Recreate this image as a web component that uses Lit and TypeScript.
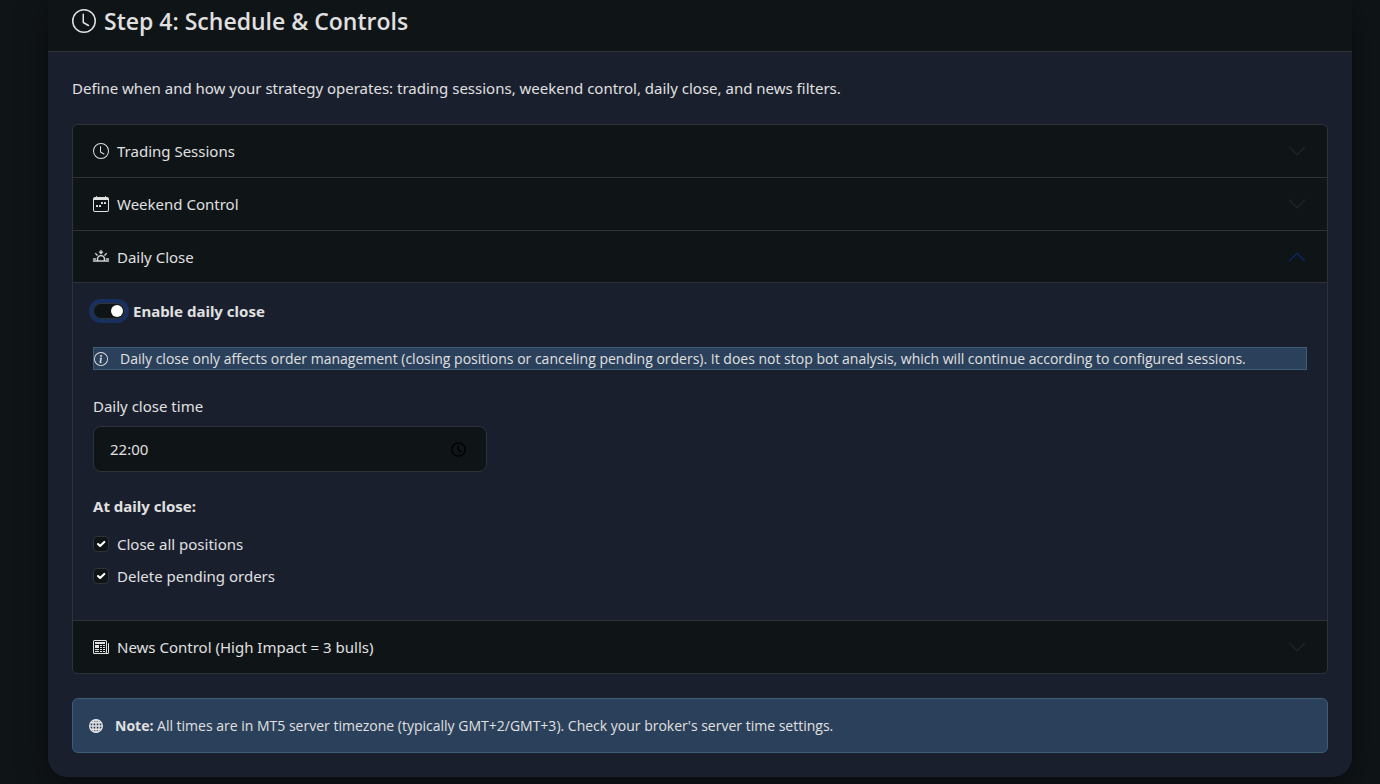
import { LitElement, html, css, svg } from "lit";
import { customElement, property, state } from "lit/decorators.js";
import { classMap } from "lit/directives/class-map.js";

const ICONS: Record<string, unknown> = {
  clock: svg`<path d="M8 3.5a.5.5 0 0 0-1 0V9a.5.5 0 0 0 .252.434l3.5 2a.5.5 0 0 0 .496-.868L8 8.71z"/><path d="M8 16A8 8 0 1 0 8 0a8 8 0 0 0 0 16m7-8A7 7 0 1 1 1 8a7 7 0 0 1 14 0"/>`,
  picker: svg`<g fill="none" stroke="currentColor" stroke-width="1.500"><circle cx="8" cy="8" r="7.100"/><path d="M7.700 3.800v4.500l3.600 2.200"/></g>`,
  week: svg`<path d="M11 6.5a.5.5 0 0 1 .5-.5h1a.5.5 0 0 1 .5.5v1a.5.5 0 0 1-.5.5h-1a.5.5 0 0 1-.5-.5zm-3 0a.5.5 0 0 1 .5-.5h1a.5.5 0 0 1 .5.5v1a.5.5 0 0 1-.5.5h-1a.5.5 0 0 1-.5-.5zm-5 3a.5.5 0 0 1 .5-.5h1a.5.5 0 0 1 .5.5v1a.5.5 0 0 1-.5.5h-1a.5.5 0 0 1-.5-.5zm3 0a.5.5 0 0 1 .5-.5h1a.5.5 0 0 1 .5.5v1a.5.5 0 0 1-.5.5h-1a.5.5 0 0 1-.5-.5z"/><path d="M3.5 0a.5.5 0 0 1 .5.5V1h8V.5a.5.5 0 0 1 1 0V1h1a2 2 0 0 1 2 2v11a2 2 0 0 1-2 2H2a2 2 0 0 1-2-2V3a2 2 0 0 1 2-2h1V.5a.5.5 0 0 1 .5-.5M1 4v10a1 1 0 0 0 1 1h12a1 1 0 0 0 1-1V4z"/>`,
  sunset: svg`<path stroke="currentColor" stroke-width=".4" d="M7.646 4.854a.5.5 0 0 0 .708 0l1.5-1.5a.5.5 0 0 0-.708-.708l-.646.647V1.5a.5.5 0 0 0-1 0v1.793l-.646-.647a.5.5 0 1 0-.708.708zm-5.303-.51a.5.5 0 0 1 .707 0l1.414 1.413a.5.5 0 0 1-.706.707L2.343 5.05a.5.5 0 0 1 0-.707zm11.314 0a.5.5 0 0 1 0 .706l-1.414 1.414a.5.5 0 1 1-.707-.707l1.414-1.414a.5.5 0 0 1 .707 0zM8 7a3 3 0 0 1 2.599 4.5H5.4A3 3 0 0 1 8 7m3.71 4.5a4 4 0 1 0-7.418 0H.499a.5.5 0 0 0 0 1h15a.5.5 0 0 0 0-1h-3.79zM0 10a.5.5 0 0 1 .5-.5h2a.5.5 0 0 1 0 1h-2A.5.5 0 0 1 0 10m13 0a.5.5 0 0 1 .5-.5h2a.5.5 0 0 1 0 1h-2a.5.5 0 0 1-.5-.5"/>`,
  news: svg`<path d="M0 2.5A1.5 1.5 0 0 1 1.5 1h11A1.5 1.5 0 0 1 14 2.5v10.528c0 .3-.05.654-.238.972h.738a.5.5 0 0 0 .5-.5v-9a.5.5 0 0 1 1 0v9a1.5 1.5 0 0 1-1.5 1.5H1.497A1.497 1.497 0 0 1 0 13.5zM12 14c.37 0 .654-.211.853-.441.092-.106.147-.279.147-.531V2.5a.5.5 0 0 0-.5-.5h-11a.5.5 0 0 0-.5.5v11c0 .278.223.5.497.5z"/><path d="M2 3h10v2H2zm0 3h4v3H2zm0 4h4v1H2zm0 2h4v1H2zm5-6h2v1H7zm3 0h2v1h-2zM7 8h2v1H7zm3 0h2v1h-2zm-3 2h2v1H7zm3 0h2v1h-2zm-3 2h2v1H7zm3 0h2v1h-2z"/>`,
  info: svg`<path d="M8 15A7 7 0 1 1 8 1a7 7 0 0 1 0 14m0 1A8 8 0 1 0 8 0a8 8 0 0 0 0 16"/><path stroke="currentColor" stroke-width=".3" d="m8.930 6.588-2.290.287-.082.380.450.083c.294.070.352.176.288.469l-.738 3.468c-.194.897.105 1.319.808 1.319.545 0 1.178-.252 1.465-.598l.088-.416c-.200.176-.492.246-.686.246-.275 0-.375-.193-.304-.533zM9 4.500a1 1 0 1 1-2 0 1 1 0 0 1 2 0"/>`,
  globe: svg`<g fill="none" stroke="currentColor" stroke-width="1.600"><circle cx="8" cy="8" r="7.200"/><ellipse cx="8" cy="8" rx="3.700" ry="7.200"/><path d="M8 .7v14.600M.7 8h14.600M1.800 4.300h12.400M1.800 11.700h12.400"/></g>`,
  chevron: svg`<path d="M1.646 4.646a.5.5 0 0 1 .708 0L8 10.293l5.646-5.647a.5.5 0 0 1 .708.708l-6 6a.5.5 0 0 1-.708 0l-6-6a.5.5 0 0 1 0-.708"/>`,
};

const icon = (name: string, cls: string) =>
  html`<svg class="icon ${cls}" viewBox="0 0 16 16" fill="currentColor" aria-hidden="true">${ICONS[name]}</svg>`;

const shared = css`
  :host { display: block; }
  * { box-sizing: border-box; }
  .icon { display: block; flex: none; width: 16px; height: 16px; }
`;

@customElement("accordion-item")
export class AccordionItem extends LitElement {
  @property() heading = "";
  @property() icon = "";
  @property({ type: Boolean }) open = false;

  static styles = [
    shared,
    css`
      h3 { margin: 0; font: inherit; }
      .toggle {
        display: flex; align-items: center; gap: 8px; width: 100%;
        padding: 14px 20px; border: 0; background: #0f1417; color: #e0e0e0;
        font: inherit; line-height: 24px; text-align: left; cursor: pointer;
      }
      .toggle.open { padding-bottom: 13px; border-bottom: 1px solid #2f3338; }
      .label { flex: 1; }
      .lead { overflow: visible; }
      .chevron { width: 20px; height: 20px; color: #212529; }
      .open .chevron { color: #052c65; transform: rotate(180deg); }
      .body { padding: 16px 20px; }
    `,
  ];

  render() {
    return html`
      <h3>
        <button
          class=${classMap({ toggle: true, open: this.open })}
          aria-expanded=${this.open ? "true" : "false"}
          @click=${() => (this.open = !this.open)}
        >
          ${icon(this.icon, "lead")}
          <span class="label">${this.heading}</span>
          ${icon("chevron", "chevron")}
        </button>
      </h3>
      ${this.open ? html`<div class="body"><slot></slot></div>` : ""}
    `;
  }
}

@customElement("app-root")
export class AppRoot extends LitElement {
  @state() private enabled = true;

  static styles = [
    shared,
    css`
      :host {
        min-height: 100vh; padding: 0 28px 7px 48px;
        overflow: hidden; background: #0f1417; color: #e0e0e0;
        font: 15px/24px "Noto Sans", "Open Sans", sans-serif;
      }
      .card { background: #1a1f2e; border-radius: 0 0 20px 20px; box-shadow: 0 8px 32px rgba(0, 0, 0, 0.4); }
      .card-header {
        display: flex; align-items: center; gap: 8px;
        padding: 7px 24px 16px; background: #0f1417; border-bottom: 1px solid #2f3338;
      }
      .card-header h2 { margin: 0; font-family: "Open Sans", sans-serif; font-size: 23px; line-height: 28px; font-weight: 600; }
      .title-icon { width: 24px; height: 24px; }
      .card-body { padding: 24px; }
      .intro { margin: 0 0 24px; }
      .accordion { border: 1px solid #2f3338; border-radius: 6px; overflow: hidden; margin-bottom: 24px; }
      accordion-item + accordion-item { border-top: 1px solid #2f3338; }

      .check { display: flex; align-items: center; gap: 8px; margin-bottom: 8px; }
      .check input {
        appearance: none; flex: none; display: grid; place-content: center;
        width: 16px; height: 16px; margin: 0; border: 1px solid #2f3338;
        border-radius: 4px; background: #0f1417;
      }
      .check input:checked::before {
        content: ""; width: 12px; height: 12px;
        background: url("data:image/svg+xml,%3Csvg xmlns='http://www.w3.org/2000/svg' viewBox='0 0 20 20'%3E%3Cpath fill='none' stroke='white' stroke-linecap='round' stroke-linejoin='round' stroke-width='3.5' d='m5 10 3.500 3.500 7-7'/%3E%3C/svg%3E");
      }
      .check.switch { margin-bottom: 24px; font-weight: 700; }
      .check.switch input {
        width: 32px; border-radius: 8px; place-content: center start; padding: 0 1px;
        box-shadow: 0 0 0 4px #17305f;
      }
      .check.switch input:checked { place-content: center end; }
      .check.switch input::before { content: ""; width: 12px; height: 12px; border-radius: 50%; background: #fff; }

      .alert {
        display: flex; align-items: center; gap: 12px;
        background: #2b405b; border: 1px solid #3e5d77;
        font-family: "Open Sans", sans-serif; font-size: 14px; line-height: 21px;
      }
      .alert .icon { width: 14px; height: 14px; }
      .inline { margin-bottom: 24px; }
      .note { padding: 16px; border-radius: 6px; }

      .grid { display: grid; grid-template-columns: repeat(3, 1fr); gap: 16px; margin-bottom: 22px; }
      .field label { display: block; margin-bottom: 8px; }
      .control {
        display: flex; align-items: center; padding: 10px 20px 10px 16px;
        border: 1px solid #2f3338; border-radius: 8px; background: #0f1417;
      }
      .control input {
        flex: 1; min-width: 0; height: 24px; padding: 0; border: 0; outline: 0;
        background: none; color: inherit; font: inherit;
      }
      .control .icon { width: 15px; height: 15px; color: #000; }
      fieldset { margin: 0 0 8px; padding: 0; border: 0; }
      legend { padding: 0; margin-bottom: 14px; font-weight: 700; }
    `,
  ];

  render() {
    return html`
      <main class="card">
        <header class="card-header">
          ${icon("clock", "title-icon")}
          <h2>Step 4: Schedule &amp; Controls</h2>
        </header>
        <div class="card-body">
          <p class="intro">
            Define when and how your strategy operates: trading sessions, weekend control, daily close, and news filters.
          </p>
          <div class="accordion">
            <accordion-item heading="Trading Sessions" icon="clock"></accordion-item>
            <accordion-item heading="Weekend Control" icon="week"></accordion-item>
            <accordion-item heading="Daily Close" icon="sunset" open>
              <div class="check switch">
                <input id="enable" type="checkbox" role="switch" .checked=${this.enabled}
                  @change=${(e: Event) => (this.enabled = (e.target as HTMLInputElement).checked)} />
                <label for="enable">Enable daily close</label>
              </div>
              <div class="alert inline">
                ${icon("info", "")}
                <span>Daily close only affects order management (closing positions or canceling pending orders). It does not stop bot analysis, which will continue according to configured sessions.</span>
              </div>
              <div class="grid">
                <div class="field">
                  <label for="time">Daily close time</label>
                  <div class="control">
                    <input id="time" type="text" inputmode="numeric" value="22:00" />
                    ${icon("picker", "")}
                  </div>
                </div>
              </div>
              <fieldset>
                <legend>At daily close:</legend>
                <div class="check">
                  <input id="positions" type="checkbox" checked />
                  <label for="positions">Close all positions</label>
                </div>
                <div class="check">
                  <input id="orders" type="checkbox" checked />
                  <label for="orders">Delete pending orders</label>
                </div>
              </fieldset>
            </accordion-item>
            <accordion-item heading="News Control (High Impact = 3 bulls)" icon="news"></accordion-item>
          </div>
          <div class="alert note">
            ${icon("globe", "")}
            <span><strong>Note:</strong> All times are in MT5 server timezone (typically GMT+2/GMT+3). Check your broker's server time settings.</span>
          </div>
        </div>
      </main>
    `;
  }
}
